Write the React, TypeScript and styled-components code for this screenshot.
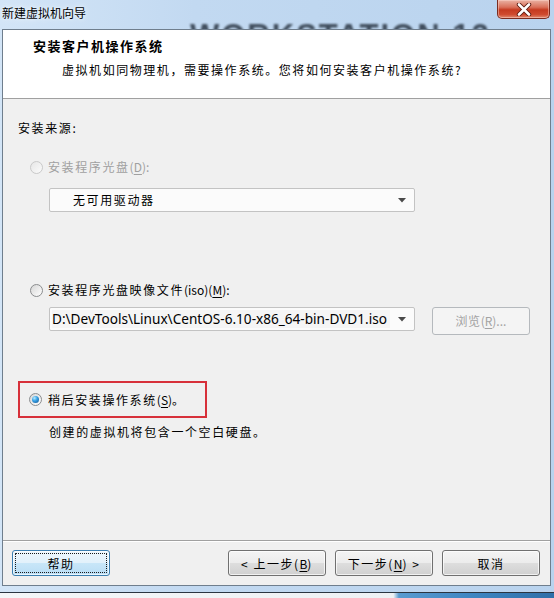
import React from "react";
import styled, { createGlobalStyle } from "styled-components";

const GlobalStyle = createGlobalStyle`
  html, body { margin: 0; padding: 0; background: #ffffff; }
  body { width: 554px; height: 598px; overflow: hidden; }
`;

const CJK = `"Noto Sans CJK SC", "Noto Sans", sans-serif`;

const Window = styled.div`
  position: relative;
  width: 554px;
  height: 598px;
  display: flex;
  flex-direction: column;
  overflow: hidden;
  background: linear-gradient(90deg, #d3e5f7 0%, #c2d9f1 35%, #b9d3ee 100%);
  font-family: ${CJK};
`;

const TitleBar = styled.div`
  position: relative;
  height: 29px;
  flex: none;
  display: flex;
  align-items: flex-start;
  justify-content: space-between;
  overflow: hidden;
`;

const Title = styled.span`
  position: relative;
  z-index: 1;
  padding: 5px 0 0 2px;
  font-size: 12px;
  line-height: 16px;
  color: #000;
  text-shadow: 0 0 6px #eef6ff, 0 0 3px #eef6ff;
`;

const Watermark = styled.span`
  position: absolute;
  left: 190px;
  top: 20px;
  font-family: "Liberation Sans", Arial, sans-serif;
  font-weight: 900;
  font-size: 31px;
  letter-spacing: 2px;
  line-height: 32px;
  color: #2a3644;
  opacity: 0.85;
  filter: blur(1.2px);
  white-space: nowrap;
`;

const CloseButton = styled.div`
  position: relative;
  z-index: 1;
  width: 53px;
  height: 19px;
  margin-right: 4px;
  box-sizing: border-box;
  border: 1px solid #7a2c20;
  border-top: none;
  border-radius: 0 0 5px 5px;
  background: linear-gradient(#eab3a4 0%, #d9705a 40%, #c53a20 55%, #cf4a2e 80%, #e08a70 100%);
  display: flex;
  align-items: center;
  justify-content: center;
  box-shadow: inset 0 0 0 1px rgba(255, 220, 210, 0.45);
`;

const FrameMiddle = styled.div`
  flex: 1;
  display: flex;
  padding: 0 3px 0 2px;
  min-height: 0;
`;

const Client = styled.div`
  flex: 1;
  display: flex;
  flex-direction: column;
  border: 1px solid #6f7e8d;
  background: #f0f0f0;
  min-width: 0;
`;

const Header = styled.div`
  flex: none;
  height: 68px;
  background: #ffffff;
  border-bottom: 1px solid #a0a0a0;
  display: flex;
  flex-direction: column;
`;

const HeaderTitle = styled.div`
  margin: 7px 0 0 30px;
  font-size: 13px;
  font-weight: 700;
  letter-spacing: 1.5px;
  line-height: 18px;
  color: #000;
`;

const HeaderSub = styled.div`
  margin: 6px 0 0 59px;
  font-size: 12px;
  letter-spacing: 1.55px;
  line-height: 18px;
  color: #000;
`;

const Body = styled.div`
  flex: 1;
  display: flex;
  flex-direction: column;
  align-items: flex-start;
  padding: 20px 0 0 15px;
  font-size: 12px;
  letter-spacing: 1.6px;
  line-height: 18px;
  color: #000;
`;

const SourceLabel = styled.div`
  height: 18px;
`;

const OptionRow = styled.div<{ $top: number; $disabled?: boolean }>`
  display: flex;
  align-items: center;
  height: 18px;
  margin: ${(p) => p.$top}px 0 0 12px;
  gap: 5px;
  color: ${(p) => (p.$disabled ? "#a0a0a0" : "#000")};
`;

const Radio = styled.span<{ $state: "disabled" | "off" | "on" }>`
  position: relative;
  box-sizing: border-box;
  width: 13px;
  height: 13px;
  border-radius: 50%;
  flex: none;
  border: 1px solid ${(p) => (p.$state === "disabled" ? "#c9c9c9" : "#8a8c8e")};
  background: ${(p) =>
    p.$state === "disabled"
      ? "linear-gradient(135deg, #e6e6e6, #fbfbfb)"
      : "linear-gradient(135deg, #d6d6d6, #ffffff)"};
  &::after {
    content: "";
    display: ${(p) => (p.$state === "on" ? "block" : "none")};
    position: absolute;
    left: 2px;
    top: 2px;
    width: 7px;
    height: 7px;
    border-radius: 50%;
    background: radial-gradient(circle at 35% 30%, #b9ecff 0%, #3aa3e6 40%, #0c4f8f 100%);
  }
`;

const Accel = styled.span`
  text-decoration: underline;
  text-underline-offset: 2px;
  letter-spacing: 0;
`;

const Latin = styled.span`
  letter-spacing: 0;
`;

const Combo = styled.div<{ $top: number; $pad: number }>`
  box-sizing: border-box;
  width: 366px;
  height: 24px;
  margin: ${(p) => p.$top}px 0 0 31px;
  border: 1px solid #c3c3c3;
  border-radius: 2px;
  background: #fbfbfb;
  display: flex;
  align-items: center;
  padding-left: ${(p) => p.$pad}px;
`;

const ComboText = styled.span`
  flex: 1;
  white-space: nowrap;
  overflow: hidden;
`;

const PathText = styled.span`
  flex: none;
  width: 338px;
  height: 18px;
  background: #f5f5f5;
  font-family: "Noto Sans", "Open Sans", sans-serif;
  font-size: 13.6px;
  letter-spacing: 0;
  color: #000;
  white-space: nowrap;
  overflow: hidden;
  line-height: 18px;
`;

const Arrow = styled.span`
  flex: none;
  width: 24px;
  display: flex;
  justify-content: center;
  margin-left: auto;
`;

const PathRow = styled.div`
  display: flex;
  align-items: flex-start;
  margin-top: 8px;
`;

const BrowseButton = styled.div`
  box-sizing: border-box;
  width: 98px;
  height: 28px;
  margin-left: 17px;
  border: 1px solid #b5b9bd;
  border-radius: 3px;
  background: #f4f4f4;
  color: #a3a3a3;
  display: flex;
  align-items: center;
  justify-content: center;
  letter-spacing: 0.5px;
`;

const Highlight = styled.div`
  box-sizing: border-box;
  margin-top: 46px;
  width: 189px;
  height: 37px;
  border: 2px solid #d7303a;
  display: flex;
  align-items: center;
  padding-left: 9px;
  gap: 6px;
`;

const Note = styled.div`
  margin: 5px 0 0 31px;
  height: 18px;
`;

const Footer = styled.div`
  flex: none;
  height: 45px;
  box-sizing: border-box;
  border-top: 1px solid #a0a0a0;
  box-shadow: inset 0 1px 0 #ffffff;
  display: flex;
  align-items: flex-start;
  padding: 9px 10px 0 9px;
  gap: 9px;
`;

const Spacer = styled.div`
  flex: 1;
`;

const Button = styled.div<{ $focused?: boolean }>`
  position: relative;
  box-sizing: border-box;
  width: 98px;
  height: 26px;
  border: 1px solid ${(p) => (p.$focused ? "#3c7fb1" : "#707070")};
  border-radius: 3px;
  background: ${(p) =>
    p.$focused
      ? "linear-gradient(#eef7fd 0%, #e2f1fb 48%, #c8e6f8 52%, #b9ddf5 100%)"
      : "linear-gradient(#f4f4f4 0%, #ececec 48%, #dddddd 52%, #d0d0d0 100%)"};
  box-shadow: inset 0 0 0 1px rgba(255, 255, 255, 0.7);
  display: flex;
  align-items: center;
  justify-content: center;
  font-size: 12px;
  letter-spacing: 1.5px;
  color: #000;
  &::after {
    content: "";
    display: ${(p) => (p.$focused ? "block" : "none")};
    position: absolute;
    inset: 2px;
    border: 1px dotted #1a1a1a;
    border-radius: 1px;
  }
`;

const FrameBottom = styled.div`
  flex: none;
  height: 6px;
`;

const BelowWindow = styled.div`
  flex: none;
  height: 5px;
  border-top: 1px solid #2b3541;
  background: linear-gradient(90deg, #f4f6f8 0%, #eef1f4 71%, #5a9bd0 72%, #3f86c2 85%, #2f6fa8 100%);
`;

const DropArrow = () => (
  <svg width="8" height="5" viewBox="0 0 8 5">
    <path d="M0 0 H8 L4 4.5 Z" fill="#4a4a4a" />
  </svg>
);

const CloseX = () => (
  <svg width="16" height="13" viewBox="0 0 16 13">
    <path
      d="M3 1.5 L13 11.5 M13 1.5 L3 11.5"
      stroke="#5a1a10"
      strokeWidth="4.4"
      strokeLinecap="round"
    />
    <path
      d="M3 1.5 L13 11.5 M13 1.5 L3 11.5"
      stroke="#ffffff"
      strokeWidth="2.6"
      strokeLinecap="round"
    />
  </svg>
);

export default function App() {
  return (
    <>
      <GlobalStyle />
      <Window>
        <TitleBar>
          <Watermark aria-hidden="true">WORKSTATION 12</Watermark>
          <Title>新建虚拟机向导</Title>
          <CloseButton>
            <CloseX />
          </CloseButton>
        </TitleBar>
        <FrameMiddle>
          <Client>
            <Header>
              <HeaderTitle>安装客户机操作系统</HeaderTitle>
              <HeaderSub>
                虚拟机如同物理机，需要操作系统。您将如何安装客户机操作系统?
              </HeaderSub>
            </Header>
            <Body>
              <SourceLabel>安装来源:</SourceLabel>
              <OptionRow $top={21} $disabled>
                <Radio $state="disabled" />
                <span>
                  安装程序光盘<Latin>(</Latin>
                  <Accel>D</Accel>
                  <Latin>):</Latin>
                </span>
              </OptionRow>
              <Combo $top={12} $pad={23}>
                <ComboText>无可用驱动器</ComboText>
                <Arrow>
                  <DropArrow />
                </Arrow>
              </Combo>
              <OptionRow $top={69}>
                <Radio $state="off" />
                <span>
                  安装程序光盘映像文件<Latin>(iso)(</Latin>
                  <Accel>M</Accel>
                  <Latin>):</Latin>
                </span>
              </OptionRow>
              <PathRow>
                <Combo $top={0} $pad={2}>
                  <PathText>D:\DevTools\Linux\CentOS-6.10-x86_64-bin-DVD1.iso</PathText>
                  <Arrow>
                    <DropArrow />
                  </Arrow>
                </Combo>
                <BrowseButton>
                  浏览<Latin>(</Latin>
                  <Accel>R</Accel>
                  <Latin>)...</Latin>
                </BrowseButton>
              </PathRow>
              <Highlight>
                <Radio $state="on" />
                <span>
                  稍后安装操作系统<Latin>(</Latin>
                  <Accel>S</Accel>
                  <Latin>)</Latin>。
                </span>
              </Highlight>
              <Note>创建的虚拟机将包含一个空白硬盘。</Note>
            </Body>
            <Footer>
              <Button $focused>帮助</Button>
              <Spacer />
              <Button>
                {"< 上一步("}
                <Accel>B</Accel>
                {")"}
              </Button>
              <Button>
                {"下一步("}
                <Accel>N</Accel>
                {") >"}
              </Button>
              <Button>取消</Button>
            </Footer>
          </Client>
        </FrameMiddle>
        <FrameBottom />
        <BelowWindow />
      </Window>
    </>
  );
}
